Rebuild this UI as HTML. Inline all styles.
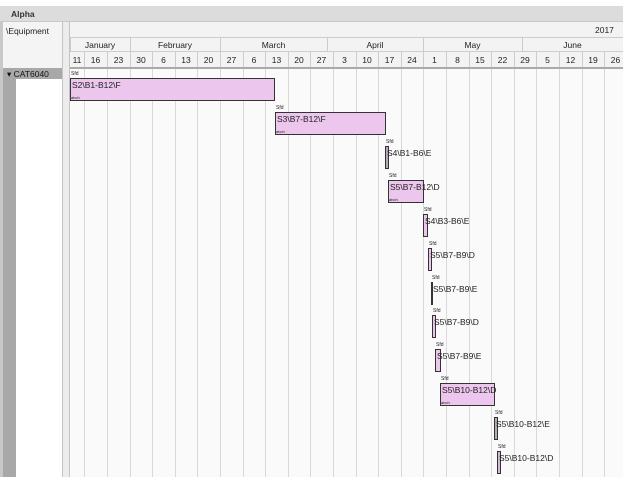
<!DOCTYPE html>
<html><head><meta charset="utf-8"><style>
*{margin:0;padding:0;box-sizing:border-box}
body{width:623px;height:477px;overflow:hidden;background:#fff;font-family:"Liberation Sans",Tahoma,sans-serif;font-size:8.5px;color:#222;position:relative}
div{position:absolute}
.t{white-space:nowrap}
.bar{background:#ecc6ec;border:1px solid #333}
.lb{font-size:8.5px;white-space:nowrap}
.sfd{font-size:5px;white-space:nowrap}
.ab{font-size:4px;white-space:nowrap}
</style></head><body>
<div style="left:0;top:6px;width:623px;height:16px;background:#dcdcdc;border-bottom:1px solid #c8c8c8"></div>
<div class="t" style="left:11px;top:9px;font-weight:bold;font-size:8.5px;color:#333">Alpha</div>
<div style="left:0;top:22px;width:3px;height:455px;background:#c8c8c8"></div>
<div style="left:3px;top:22px;width:59px;height:47px;background:#f4f4f4;border-bottom:1px solid #ccc"></div>
<div class="t" style="left:6px;top:26px">\Equipment</div>
<div style="left:3px;top:69px;width:13px;height:408px;background:#a8a8a8"></div>
<div style="left:16px;top:69px;width:46px;height:408px;background:#fff"></div>
<div style="left:3px;top:68px;width:59px;height:11px;background:#a8a8a8"></div>
<div class="t" style="left:7px;top:69px;color:#111">&#9662; CAT6040</div>
<div style="left:62px;top:22px;width:8px;height:455px;background:#ececec;border-left:1px solid #c4c4c4;border-right:1px solid #c4c4c4"></div>
<div style="left:70px;top:22px;width:553px;height:47px;background:#f3f3f3"></div>
<div style="left:70px;top:37px;width:553px;height:1px;background:#ccc"></div>
<div style="left:70px;top:51px;width:553px;height:1px;background:#ccc"></div>
<div style="left:70px;top:67px;width:553px;height:2px;background:#aaa"></div>
<div style="left:70px;top:69px;width:553px;height:408px;background:#fafafa"></div>
<div class="t" style="left:595px;top:25px">2017</div>
<div id="g"></div>
<script>
var h='';
var xs=[84,107,130,152,175,197,220,243,265,288,310,333,356,378,401,423,446,469,491,514,536,559,582,604,627];
var ds=['11','16','23','30','6','13','20','27','6','13','20','27','3','10','17','24','1','8','15','22','29','5','12','19','26'];
var prev=70;
for(var i=0;i<25;i++){
 var x=xs[i];
 if(i<24){h+='<div style="left:'+x+'px;top:52px;width:1px;height:15px;background:#ccc"></div>';
 h+='<div style="left:'+x+'px;top:69px;width:1px;height:408px;background:#d9d9d9"></div>';}
 h+='<div class="t" style="left:'+prev+'px;top:55px;width:'+(x-prev)+'px;text-align:center">'+ds[i]+'</div>';
 prev=x;
}
var ms=[[70,130,'January'],[130,220,'February'],[220,327,'March'],[327,423,'April'],[423,522,'May'],[522,623,'June']];
ms.forEach(function(m){
 h+='<div style="left:'+m[0]+'px;top:38px;width:1px;height:13px;background:#ccc"></div>';
 h+='<div class="t" style="left:'+m[0]+'px;top:40px;width:'+(m[1]-m[0])+'px;text-align:center">'+m[2]+'</div>';
});
var bars=[[70,275,78,'S2\\B1-B12\\F','#ecc6ec',1],[275,386,112,'S3\\B7-B12\\F','#ecc6ec',1],[385,389,146,'S4\\B1-B6\\E','#b8a8b8',0],[388,424,180,'S5\\B7-B12\\D','#ecc6ec',1],[423,428,214,'S4\\B3-B6\\E','#ecc6ec',0],[428,432,248,'S5\\B7-B9\\D','#ecc6ec',0],[431,433,282,'S5\\B7-B9\\E','#222',0],[432,436,315,'S5\\B7-B9\\D','#ecc6ec',0],[435,441,349,'S5\\B7-B9\\E','#ecc6ec',0],[440,495,383,'S5\\B10-B12\\D','#ecc6ec',1],[494,498,417,'S5\\B10-B12\\E','#b8a8b8',0],[497,501,451,'S5\\B10-B12\\D','#d8b8d8',0]];
bars.forEach(function(b){
 h+='<div class="sfd" style="left:'+(b[0]+1)+'px;top:'+(b[2]-7)+'px">Sfd</div>';
 h+='<div class="bar" style="left:'+b[0]+'px;top:'+b[2]+'px;width:'+(b[1]-b[0])+'px;height:23px;background:'+b[4]+'"></div>';
 h+='<div class="lb" style="left:'+(b[0]+2)+'px;top:'+(b[2]+2)+'px">'+b[3]+'</div>';
 if(b[5])h+='<div class="ab" style="left:'+(b[0]+1)+'px;top:'+(b[2]+17)+'px">abch</div>';
});
document.getElementById('g').outerHTML=h;
</script>
</body></html>
